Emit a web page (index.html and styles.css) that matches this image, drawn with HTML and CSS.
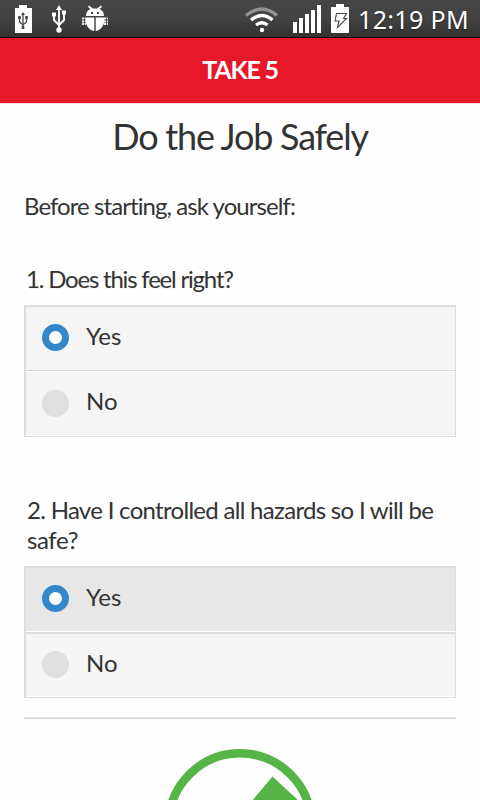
FILE: index.html
```html
<!DOCTYPE html>
<html lang="en">
<head>
<meta charset="utf-8">
<title>Take 5</title>
<link rel="stylesheet" href="styles.css">
</head>
<body>
<div class="status">
  <svg class="icons" width="110" height="37" viewBox="0 0 110 37" fill="#fff">
    <path d="M15 8h4V5h8v3h5v25H15z"/>
    <g fill="none" stroke="#484848" stroke-width="1.3"><path d="M23 13v15M19.500 17v5l3.500 3 3.500-3v-5"/></g>
    <path fill="#484848" d="M21 15l2-3 2 3zM18.200 16h2.600v3h-2.600zM25.200 16h2.600v3h-2.600zM21.700 26h2.600v3h-2.600z"/>
    <g fill="none" stroke="#f4f4f4" stroke-width="2"><path d="M59 9v20M54 14v6l5 5 5-5v-7"/></g>
    <path d="M56 10l3-5 3 5zM52 12.500h4v4h-4zM62 10.500h4v4h-4z"/><circle cx="59" cy="30" r="2.700"/>
    <path fill-rule="evenodd" d="M86 16c0-4 2-6 4.500-7l-2.500-2 1-1.500 4 3h4l4-3 1 1.500-2.500 2c2.500 1 4.500 3 4.500 7zM91 12v2h2v-2zm6 0v2h2v-2z"/>
    <path d="M85.500 17.500h8.800V31C88 30 85 24 85.500 17.500zM95.700 17.500h8.800c.5 6.500-2.500 12.500-8.800 13.500z"/>
    <path fill="none" stroke="#eee" stroke-width="2" stroke-dasharray="2 .8" d="M82 18.500h4M82 21.500h4M82 24h4M104 18.500h4M104 21.500h4M104 24h4"/>
  </svg>
  <svg class="icons" width="110" height="37" viewBox="244 0 110 37" fill="#fff">
    <g fill="none" stroke-width="3.300"><path stroke="#929292" d="M246 15.500q16-13 31 0"/><path stroke="#fff" d="M251 20q11-9 21.500 0M256 25q6-4.500 11.500 0"/></g>
    <circle cx="262" cy="30" r="2.200"/>
    <path d="M293 22h4v11h-4zM299 18h4v15h-4zM305 14h4v19h-4zM311 10h4v23h-4zM317 5h4v28h-4zM331 7h5V4h8v3h5v26h-18z"/>
    <path fill="none" stroke="#484848" stroke-width="1.100" d="M336.500 13.500h10l-3 5h3l-9 9 1.500-6.500h-4z"/>
  </svg>
  <span class="clock">12:19 PM</span>
</div>
<header class="bar">TAKE 5</header>
<main class="page">
  <h1 class="title"><span>Do the Job Safely</span></h1>
  <p class="intro">Before starting, ask yourself:</p>
  <p class="question q1">1. Does this feel right?</p>
  <div class="options first">
    <div class="row"><span class="radio on"></span><span class="yes">Yes</span></div>
    <div class="row"><span class="radio"></span><span class="no">No</span></div>
  </div>
  <p class="question q2"><span class="long">2. Have I controlled all hazards so I will be</span><br><span class="safe">safe?</span></p>
  <div class="options second">
    <div class="row active"><span class="radio on"></span><span class="yes">Yes</span></div>
    <div class="row"><span class="radio"></span><span class="no">No</span></div>
  </div>
  <div class="rule"></div>
  <svg class="done" width="152" height="51" viewBox="164 749 152 51">
    <circle cx="240" cy="824.600" r="71.300" fill="none" stroke="#57b447" stroke-width="8.600"/>
    <path fill="#57b447" d="M272.500 776.500L299 801h-47z"/>
  </svg>
</main>
</body>
</html>
```
FILE: styles.css
```css
* { box-sizing: border-box; }
body { margin: 0; height: 800px; overflow: hidden; background: #fefefe; color: #333; font-family: Lato, sans-serif; font-size: 24px; }
p, h1 { margin: 0; font-weight: 400; white-space: nowrap; }
.status { display: flex; height: 38px; background: linear-gradient(#464646, #424242 50%, #333); border-bottom: 1px solid #000; }
.icons { flex: none; }
.icons + .icons { margin-left: 134px; }
.clock { margin-left: 4px; color: #fff; font: 25px/38px "Noto Sans", sans-serif; letter-spacing: .35px; white-space: nowrap; text-shadow: 0 1px 2px #222; }
.bar { height: 65px; background: #e6182a; color: #fff; font-weight: 700; font-size: 25px; line-height: 63px; text-align: center; letter-spacing: -1.2px; }
.page { padding: 0 24px; border-top: 1px solid #f6dcdc; }
.title { height: 64px; font-size: 36px; line-height: 64px; text-align: center; letter-spacing: -1.22px; }
.intro { height: 30px; margin-top: 23px; line-height: 30px; letter-spacing: -.93px; }
.question { padding-left: 2px; line-height: 30px; letter-spacing: -1.2px; text-shadow: 0 1px 0 #f3f3f3; }
.q1 { margin-top: 43px; height: 41px; }
.q2 { margin-top: 58px; height: 71px; padding-left: 3px; }
.long { letter-spacing: -.7px; }
.safe { letter-spacing: -.4px; }
.options { border: solid #ddd; border-width: 2px 1px 1px 2px; background: #f5f5f5; }
.row { display: flex; height: 64px; padding-left: 16px; border-bottom: 1px solid #fff; }
.row span:last-child { margin-left: 17px; line-height: 58px; }
.radio { flex: none; width: 27px; height: 27px; margin-top: 18px; border-radius: 50%; background: #dfdfdf; }
.radio.on { border: 7.500px solid #3388cc; background: #fff; margin-top: 17px; }
.first .row:first-child { border-bottom-color: #d9d9d9; }
.first .row:last-child { height: 65px; border-top: 1px solid #fff; }
.second .row:last-child { height: 65px; border-top: 2px solid #ddd; }
.active { background: #e7e7e7; }
.second .radio { margin-top: 17px; }
.rule { height: 2px; margin-top: 19px; background: #d4d4d4; border-top: 1px solid #e5e5e5; }
.done { display: block; margin: 30px auto 0; }
```
